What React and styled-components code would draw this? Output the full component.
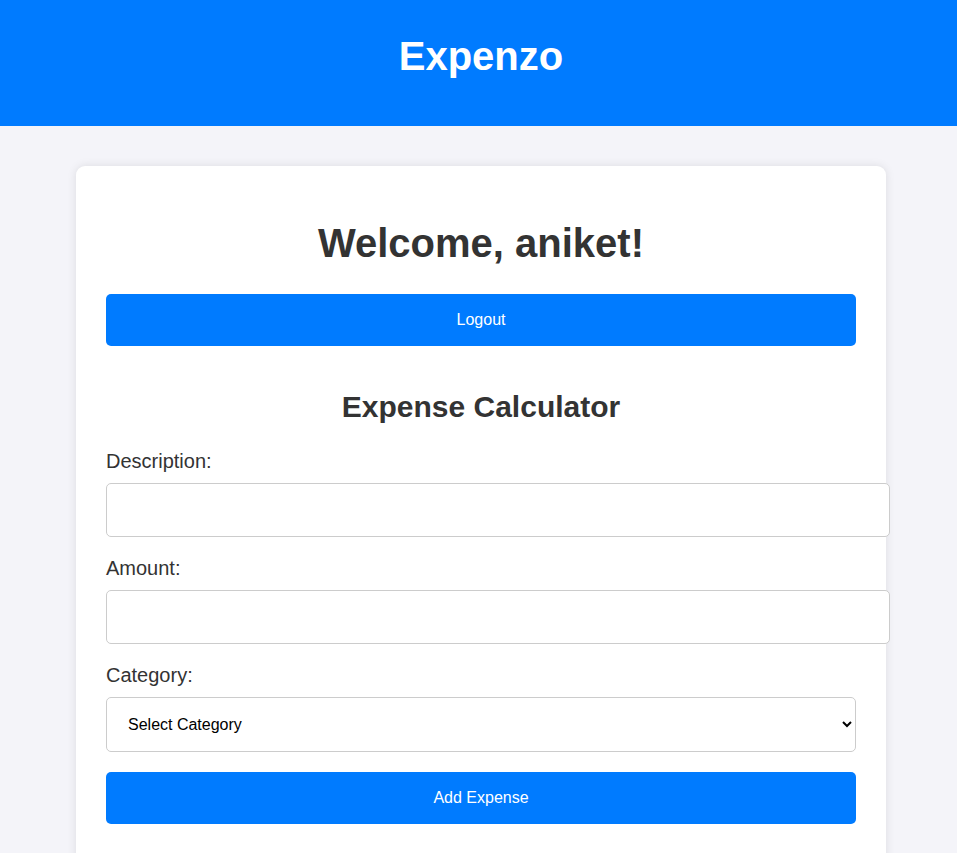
import React from "react";
import styled, { createGlobalStyle } from "styled-components";

const GlobalStyle = createGlobalStyle`
  html, body {
    margin: 0;
    padding: 0;
    background: #f4f4f9;
    font-family: "Liberation Sans", Arial, sans-serif;
    color: #333;
    overflow-x: hidden;
  }
  * { font-family: "Liberation Sans", Arial, sans-serif; }
`;

const Page = styled.div`
  min-height: 853px;
  background: #f4f4f9;
`;

const Header = styled.header`
  height: 126px;
  box-sizing: border-box;
  padding: 33px 0 0 5px;
  background: #007bff;
  text-align: center;
`;

const Brand = styled.h1`
  margin: 0;
  font-size: 40px;
  line-height: 46px;
  font-weight: 700;
  color: #fff;
`;

const Main = styled.main`
  padding: 40px 0 0 5px;
`;

const Card = styled.section`
  width: 750px;
  margin: 0 auto;
  padding: 30px 30px 40px;
  background: #fff;
  border-radius: 9px;
  box-shadow: 0 0 10px rgba(0, 0, 0, 0.1);
  min-height: 700px;
`;

const Welcome = styled.h1`
  margin: 24px 0 28px;
  font-size: 40px;
  line-height: 46px;
  font-weight: 700;
  text-align: center;
  color: #333;
`;

const Button = styled.button`
  display: block;
  width: 100%;
  height: 52px;
  padding: 0;
  border: none;
  border-radius: 5px;
  background: #007bff;
  color: #fff;
  font-size: 16px;
  cursor: pointer;
`;

const SectionTitle = styled.h2`
  margin: 44px 0 26px;
  font-size: 30px;
  line-height: 34px;
  font-weight: 700;
  text-align: center;
  color: #333;
`;

const Form = styled.form`
  display: block;
`;

const Label = styled.label`
  display: block;
  margin-bottom: 10px;
  font-size: 20px;
  line-height: 23px;
  color: #333;
`;

const Input = styled.input`
  display: block;
  box-sizing: content-box;
  width: 100%;
  height: 20px;
  padding: 16px;
  margin: 0 0 20px;
  border: 1px solid #ccc;
  border-radius: 5px;
  font-size: 16px;
  background: #fff;
  outline: none;
`;

const Select = styled.select`
  display: block;
  box-sizing: border-box;
  width: 100%;
  height: 55px;
  padding: 0 12px 0 17px;
  margin: 0 0 20px;
  border: 1px solid #ccc;
  border-radius: 5px;
  font-size: 16px;
  color: #000;
  background: #fff;
`;

export default function App() {
  return (
    <>
      <GlobalStyle />
      <Page>
        <Header>
          <Brand>Expenzo</Brand>
        </Header>
        <Main>
          <Card>
            <Welcome>Welcome, aniket!</Welcome>
            <Button type="button">Logout</Button>
            <SectionTitle>Expense Calculator</SectionTitle>
            <Form onSubmit={(e) => e.preventDefault()}>
              <Label htmlFor="desc">Description:</Label>
              <Input id="desc" type="text" />
              <Label htmlFor="amount">Amount:</Label>
              <Input id="amount" type="number" />
              <Label htmlFor="cat">Category:</Label>
              <Select id="cat" defaultValue="">
                <option value="">Select Category</option>
                <option value="food">Food</option>
                <option value="travel">Travel</option>
                <option value="bills">Bills</option>
              </Select>
              <Button type="submit">Add Expense</Button>
            </Form>
          </Card>
        </Main>
      </Page>
    </>
  );
}
